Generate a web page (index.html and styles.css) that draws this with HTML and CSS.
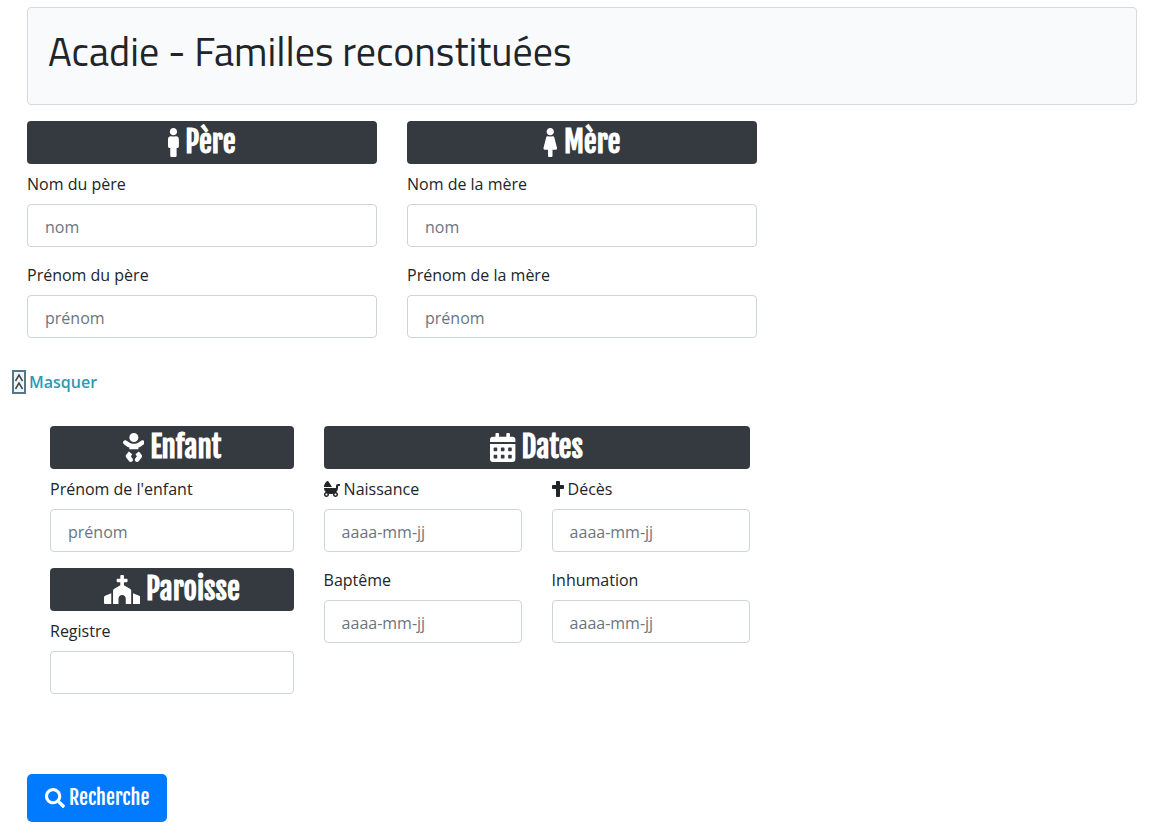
FILE: index.html
```html
<!DOCTYPE html>
<html lang="fr">
<head>
    <meta charset="UTF-8">
    <meta name="viewport" content="width=device-width, initial-scale=1.0">
    <title>Acadie - Familles reconstituées</title>
    <link rel="stylesheet" href="styles.css">
</head>
<body>
    <header class="page-header">
        <h1>Acadie - Familles reconstituées</h1>
    </header>

    <form class="search-form">
        <!-- Parents -->
        <div class="row parents">
            <div class="col">
                <h2 class="section-title">
                    <svg class="icon" viewBox="0 0 192 512" aria-hidden="true"><path d="M96 0c35.346 0 64 28.654 64 64s-28.654 64-64 64-64-28.654-64-64S60.654 0 96 0m48 144h-11.36c-22.711 10.443-49.59 10.894-73.28 0H48c-26.51 0-48 21.49-48 48v136c0 13.255 10.745 24 24 24h16v136c0 13.255 10.745 24 24 24h64c13.255 0 24-10.745 24-24V352h16c13.255 0 24-10.745 24-24V192c0-26.51-21.49-48-48-48z"/></svg>
                    Père
                </h2>
                <div class="form-group">
                    <label for="nomPere">Nom du père</label>
                    <input type="text" id="nomPere" placeholder="nom">
                </div>
                <div class="form-group">
                    <label for="prenomPere">Prénom du père</label>
                    <input type="text" id="prenomPere" placeholder="prénom">
                </div>
            </div>
            <div class="col">
                <h2 class="section-title">
                    <svg class="icon" viewBox="0 0 256 512" aria-hidden="true"><path d="M128 0c35.346 0 64 28.654 64 64s-28.654 64-64 64c-35.346 0-64-28.654-64-64S92.654 0 128 0m119.283 354.179l-48-192A24 24 0 0 0 176 144h-11.36c-22.711 10.443-49.59 10.894-73.28 0H80a24 24 0 0 0-23.283 18.179l-48 192C4.935 369.305 16.383 384 32 384h56v104c0 13.255 10.745 24 24 24h32c13.255 0 24-10.745 24-24V384h56c15.591 0 27.071-14.671 23.283-29.821z"/></svg>
                    Mère
                </h2>
                <div class="form-group">
                    <label for="nomMere">Nom de la mère</label>
                    <input type="text" id="nomMere" placeholder="nom">
                </div>
                <div class="form-group">
                    <label for="prenomMere">Prénom de la mère</label>
                    <input type="text" id="prenomMere" placeholder="prénom">
                </div>
            </div>
        </div>

        <a class="toggle" href="#details">
            <svg class="toggle-icon" viewBox="0 0 14 24" aria-hidden="true">
                <rect class="toggle-box" x="1" y="1" width="12" height="22"/>
                <path class="toggle-arrow" d="M3.500 11L7 5l3.500 6M3.500 19L7 13l3.500 6"/>
            </svg>
            Masquer
        </a>

        <!-- Child, parish and dates -->
        <div class="row details" id="details">
            <div class="col">
                <h2 class="section-title">
                    <svg class="icon" viewBox="0 0 384 512" aria-hidden="true"><path d="M192 160c44.200 0 80-35.800 80-80S236.200 0 192 0s-80 35.800-80 80 35.800 80 80 80zm-53.400 248.800l25.600-32-61.500-51.200L56.800 383c-11.400 14.200-11.700 34.400-.8 49l48 64c7.900 10.500 19.900 16 32 16 8.300 0 16.800-2.600 24-8 17.700-13.200 21.200-38.300 8-56l-29.400-39.200zm142.700-83.200l-61.500 51.200 25.600 32L216 448c-13.200 17.700-9.700 42.800 8 56 7.200 5.400 15.600 8 24 8 12.200 0 24.200-5.500 32-16l48-64c10.900-14.600 10.600-34.800-.8-49l-45.900-57.400zM376.700 145c-12.700-18.100-37.600-22.400-55.700-9.800l-40.600 28.500c-52.700 37-124.200 37-176.800 0L63 135.300C44.900 122.600 20 127 7.300 145-5.400 163.100-1 188 17 200.700l40.600 28.500c17 11.900 35.400 20.900 54.400 27.900V288h160v-30.800c19-7 37.400-16 54.400-27.900l40.600-28.500c18.100-12.800 22.400-37.700 9.700-55.800z"/></svg>
                    Enfant
                </h2>
                <div class="form-group">
                    <label for="prenomEnfant">Prénom de l'enfant</label>
                    <input type="text" id="prenomEnfant" placeholder="prénom">
                </div>
                <h2 class="section-title">
                    <svg class="icon" viewBox="0 0 640 512" aria-hidden="true"><path d="M464.460 246.680L352 179.200V128h48c8.840 0 16-7.160 16-16V80c0-8.840-7.160-16-16-16h-48V16c0-8.840-7.160-16-16-16h-32c-8.840 0-16 7.160-16 16v48h-48c-8.840 0-16 7.160-16 16v32c0 8.840 7.160 16 16 16h48v51.200l-112.460 67.480A31.997 31.997 0 0 0 160 274.120V512h96v-96c0-35.350 28.650-64 64-64s64 28.650 64 64v96h96V274.120c0-11.240-5.900-21.660-15.540-27.440zM0 395.960V496c0 8.840 7.160 16 16 16h112V320L19.390 366.540A32.024 32.024 0 0 0 0 395.960zm620.610-29.420L512 320v192h112c8.840 0 16-7.160 16-16V395.960c0-12.800-7.630-24.370-19.390-29.420z"/></svg>
                    Paroisse
                </h2>
                <div class="form-group">
                    <label for="registre">Registre</label>
                    <input type="text" id="registre">
                </div>
            </div>
            <div class="col">
                <h2 class="section-title">
                    <svg class="icon" viewBox="0 0 448 512" aria-hidden="true"><path fill-rule="evenodd" d="M0 464c0 26.500 21.500 48 48 48h352c26.500 0 48-21.500 48-48V192H0zM76 256h40q12 0 12 12v40q0 12-12 12H76q-12 0-12-12v-40q0-12 12-12zm128 0h40q12 0 12 12v40q0 12-12 12h-40q-12 0-12-12v-40q0-12 12-12zm128 0h40q12 0 12 12v40q0 12-12 12h-40q-12 0-12-12v-40q0-12 12-12zM76 384h40q12 0 12 12v40q0 12-12 12H76q-12 0-12-12v-40q0-12 12-12zm128 0h40q12 0 12 12v40q0 12-12 12h-40q-12 0-12-12v-40q0-12 12-12zm128 0h40q12 0 12 12v40q0 12-12 12h-40q-12 0-12-12v-40q0-12 12-12zM400 64h-48V16c0-8.800-7.200-16-16-16h-32c-8.800 0-16 7.200-16 16v48H160V16c0-8.800-7.200-16-16-16h-32c-8.800 0-16 7.200-16 16v48H48C21.500 64 0 85.500 0 112v48h448v-48c0-26.500-21.500-48-48-48z"/></svg>
                    Dates
                </h2>
                <div class="dates">
                    <div class="form-group">
                        <label for="naissance">
                            <svg class="icon" viewBox="0 0 512 512" aria-hidden="true"><path d="M144.800 17c-11.300-17.800-37.200-22.800-54-9.400C35.300 51.900 0 118 0 192h256L144.800 17zM496 96h-48c-35.300 0-64 28.700-64 64v64H0c0 50.600 23 96.400 60.300 130.700C25.700 363.600 0 394.700 0 432c0 44.200 35.800 80 80 80s80-35.800 80-80c0-8.900-1.800-17.200-4.400-25.200 21.600 5.900 44.600 9.200 68.400 9.200s46.900-3.300 68.400-9.200c-2.700 8-4.400 16.300-4.400 25.200 0 44.200 35.800 80 80 80s80-35.800 80-80c0-37.300-25.700-68.400-60.300-77.300C425 320.400 448 274.600 448 224v-64h48c8.800 0 16-7.200 16-16v-32c0-8.800-7.200-16-16-16zM80 464c-17.600 0-32-14.400-32-32s14.400-32 32-32 32 14.400 32 32-14.400 32-32 32zm320-32c0 17.600-14.400 32-32 32s-32-14.400-32-32 14.400-32 32-32 32 14.400 32 32z"/></svg>
                            Naissance
                        </label>
                        <input type="text" id="naissance" placeholder="aaaa-mm-jj">
                    </div>
                    <div class="form-group">
                        <label for="deces">
                            <svg class="icon" viewBox="0 0 384 512" aria-hidden="true"><path d="M352 128h-96V32c0-17.670-14.330-32-32-32h-64c-17.670 0-32 14.330-32 32v96H32c-17.670 0-32 14.330-32 32v64c0 17.670 14.330 32 32 32h96v224c0 17.670 14.330 32 32 32h64c17.670 0 32-14.330 32-32V256h96c17.670 0 32-14.330 32-32v-64c0-17.670-14.330-32-32-32z"/></svg>
                            Décès
                        </label>
                        <input type="text" id="deces" placeholder="aaaa-mm-jj">
                    </div>
                    <div class="form-group">
                        <label for="bapteme">Baptême</label>
                        <input type="text" id="bapteme" placeholder="aaaa-mm-jj">
                    </div>
                    <div class="form-group">
                        <label for="inhumation">Inhumation</label>
                        <input type="text" id="inhumation" placeholder="aaaa-mm-jj">
                    </div>
                </div>
            </div>
        </div>

        <button type="submit" class="search-btn">
            <svg class="icon" viewBox="0 0 512 512" aria-hidden="true"><path d="M505 442.700L405.300 343c-4.500-4.500-10.600-7-17-7H372c27.600-35.300 44-79.700 44-128C416 93.100 322.900 0 208 0S0 93.100 0 208s93.100 208 208 208c48.300 0 92.700-16.400 128-44v16.300c0 6.400 2.500 12.500 7 17l99.700 99.700c9.400 9.400 24.600 9.400 33.900 0l28.300-28.300c9.400-9.400 9.400-24.600.1-34zM208 336c-70.700 0-128-57.200-128-128 0-70.700 57.200-128 128-128 70.700 0 128 57.200 128 128 0 70.700-57.200 128-128 128z"/></svg>
            Recherche
        </button>
    </form>
</body>
</html>
```

FILE: styles.css
```css
* {
    box-sizing: border-box;
}

body {
    margin: 0;
    padding: 7px 9px 7px 12px;
    font-family: "Open Sans", sans-serif;
    font-size: 16px;
    line-height: 24px;
    color: #212529;
    background-color: #fff;
}

.page-header {
    margin: 0 15px 16px;
    padding: 20px 20px 28px;
    border: 1px solid #d6dadd;
    border-radius: 4px;
    background-color: #f8fafc;
}

h1 {
    margin: 0;
    font-family: "Titillium Web", "Open Sans", sans-serif;
    font-size: 40px;
    font-weight: 400;
    line-height: 48px;
}

/* Grid */
.row {
    display: grid;
}

.col {
    padding: 0 15px;
}

.parents {
    width: 66.6667%;
    grid-template-columns: 1fr 1fr;
}

.details {
    width: 64%;
    margin: 26px 0 64px 23px;
    grid-template-columns: 3fr 5fr;
}

.dates {
    display: grid;
    grid-template-columns: 1fr 1fr;
    column-gap: 30px;
}

.icon {
    height: 1em;
    fill: currentColor;
    flex: none;
}

.section-title {
    display: flex;
    align-items: center;
    justify-content: center;
    gap: 6px;
    margin: 0 0 8px;
    border-radius: 4px;
    background-color: #343a40;
    color: #fff;
    font-family: "Fjalla One", "Liberation Sans Narrow", "Roboto Condensed", "Open Sans Condensed", sans-serif;
    font-size: 29px;
    font-weight: 700;
    line-height: 43px;
}

/* Fields */
.form-group {
    margin-bottom: 16px;
}

label {
    display: flex;
    align-items: center;
    gap: 4px;
    margin-bottom: 8px;
}

input {
    display: block;
    width: 100%;
    height: 43px;
    padding: 4px 17px 2px;
    border: 1px solid #ced4da;
    border-radius: 4px;
    background-color: #fff;
    color: #495057;
    font: inherit;
}

input::placeholder {
    color: #6c757d;
    opacity: 1;
}

.toggle {
    display: inline-flex;
    align-items: center;
    gap: 3px;
    margin-top: 16px;
    color: #2c9ab7;
    font-weight: 600;
    text-decoration: none;
}

.toggle-icon {
    width: 14px;
    height: 24px;
}

.toggle-box {
    fill: #eef6f9;
    stroke: #54788a;
    stroke-width: 2;
}

.toggle-arrow {
    fill: none;
    stroke: #444;
    stroke-width: 1.5;
}

.search-btn {
    display: flex;
    align-items: center;
    gap: 4px;
    margin-left: 15px;
    padding: 8px 18px;
    border: none;
    border-radius: 5px;
    background-color: #007bff;
    color: #fff;
    font-family: "Fjalla One", "Liberation Sans Narrow", "Roboto Condensed", "Open Sans Condensed", sans-serif;
    font-size: 20px;
    line-height: 32px;
    cursor: pointer;
}

.search-btn:hover {
    background-color: #0069d9;
}
```
